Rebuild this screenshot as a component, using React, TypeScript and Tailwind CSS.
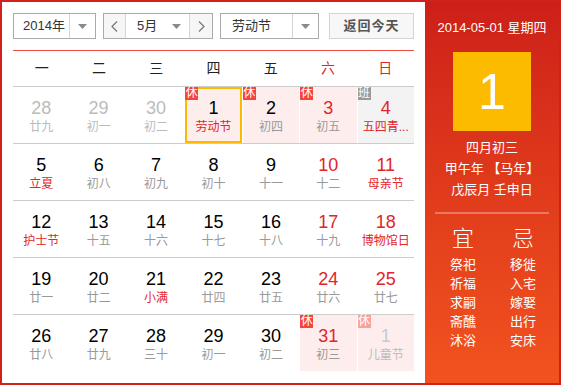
import React from "react";

type Cell = {
  d: string;
  l: string;
  dim?: boolean;
  redNum?: boolean;
  redL?: boolean;
  badge?: "休" | "班";
  bg?: "pink" | "grey";
  sel?: boolean;
  faded?: boolean;
};

const rows: Cell[][] = [
  [
    { d: "28", l: "廿九", dim: true },
    { d: "29", l: "初一", dim: true },
    { d: "30", l: "初二", dim: true },
    { d: "1", l: "劳动节", redL: true, badge: "休", bg: "pink", sel: true },
    { d: "2", l: "初四", badge: "休", bg: "pink" },
    { d: "3", l: "初五", redNum: true, badge: "休", bg: "pink" },
    { d: "4", l: "五四青...", redNum: true, redL: true, badge: "班", bg: "grey" },
  ],
  [
    { d: "5", l: "立夏", redL: true },
    { d: "6", l: "初八" },
    { d: "7", l: "初九" },
    { d: "8", l: "初十" },
    { d: "9", l: "十一" },
    { d: "10", l: "十二", redNum: true },
    { d: "11", l: "母亲节", redNum: true, redL: true },
  ],
  [
    { d: "12", l: "护士节", redL: true },
    { d: "13", l: "十五" },
    { d: "14", l: "十六" },
    { d: "15", l: "十七" },
    { d: "16", l: "十八" },
    { d: "17", l: "十九", redNum: true },
    { d: "18", l: "博物馆日", redNum: true, redL: true },
  ],
  [
    { d: "19", l: "廿一" },
    { d: "20", l: "廿二" },
    { d: "21", l: "小满", redL: true },
    { d: "22", l: "廿四" },
    { d: "23", l: "廿五" },
    { d: "24", l: "廿六", redNum: true },
    { d: "25", l: "廿七", redNum: true },
  ],
  [
    { d: "26", l: "廿八" },
    { d: "27", l: "廿九" },
    { d: "28", l: "三十" },
    { d: "29", l: "初一" },
    { d: "30", l: "初二" },
    { d: "31", l: "初三", redNum: true, badge: "休", bg: "pink" },
    { d: "1", l: "儿童节", dim: true, badge: "休", bg: "pink", faded: true },
  ],
];

const weekdays = ["一", "二", "三", "四", "五", "六", "日"];

const CJK = "font-['Liberation_Sans','Noto_Sans_CJK_SC',sans-serif]";

function Caret() {
  return (
    <svg width="9" height="5" viewBox="0 0 9 5">
      <path d="M0 0 H9 L4.5 5 Z" fill="#8a8a8a" />
    </svg>
  );
}

function Chevron({ dir }: { dir: "l" | "r" }) {
  return (
    <svg width="7" height="11" viewBox="0 0 7 11">
      <path
        d={dir === "l" ? "M6 0.5 L1 5.5 L6 10.5" : "M1 0.5 L6 5.5 L1 10.5"}
        fill="none"
        stroke="#777"
        strokeWidth="1.2"
      />
    </svg>
  );
}

function DayCell({ c }: { c: Cell }) {
  const bg =
    c.bg === "pink" ? "bg-[#fdeeed]" : c.bg === "grey" ? "bg-[#f3f3f3]" : "bg-white";
  const numColor = c.dim
    ? c.faded
      ? "text-[#c5cbd2]"
      : "text-[#bbbbbb]"
    : c.redNum
    ? "text-[#e3242b]"
    : "text-black";
  const lColor = c.dim ? "text-[#bbbbbb]" : c.redL ? "text-[#e3242b]" : "text-[#999999]";
  const badgeColor =
    c.badge === "班" ? "bg-[#999999]" : c.faded ? "bg-[#f7a39c]" : "bg-[#f5443c]";
  return (
    <div
      className={`relative h-[56px] flex flex-col items-center ${bg} ${
        c.sel ? "border-2 border-[#fcb900] pt-[8px]" : "pt-[10px]"
      }`}
    >
      {c.badge && (
        <div
          className={`absolute ${c.sel ? "-left-[2px] -top-[2px]" : "left-0 top-0"} w-[13px] h-[13px] ${badgeColor} text-white text-[12px] leading-[13px] flex items-center justify-center`}
        >
          {c.badge}
        </div>
      )}
      <div className={`text-[18px] leading-[22px] ${numColor}`}>{c.d}</div>
      <div className={`text-[12px] leading-[16px] whitespace-nowrap ${lColor}`}>{c.l}</div>
    </div>
  );
}

export default function App() {
  return (
    <div className={`w-[561px] h-[385px] flex border-2 border-[#d0211b] bg-[#d0211b] ${CJK}`}>
      {/* Left calendar */}
      <div className="w-[423px] h-full bg-white px-[11px] pt-[11px] flex flex-col">
        {/* Header controls */}
        <div className="flex h-[26px] text-[13px] text-[#333]">
          <div className="w-[83px] flex border border-[#aaaaaa] bg-white">
            <div className="flex-1 flex items-center pl-[9px]">2014年</div>
            <div className="w-[26px] border-l border-[#d5d5d5] flex items-center justify-center">
              <Caret />
            </div>
          </div>
          <div className="w-[110px] ml-[7px] flex border border-[#aaaaaa]">
            <div className="w-[22px] bg-[#f6f6f6] border-r border-[#d5d5d5] flex items-center justify-center">
              <Chevron dir="l" />
            </div>
            <div className="flex-1 flex items-center justify-between pl-[11px] pr-[8px] bg-white">
              <span>5月</span>
              <Caret />
            </div>
            <div className="w-[23px] bg-[#f6f6f6] border-l border-[#d5d5d5] flex items-center justify-center">
              <Chevron dir="r" />
            </div>
          </div>
          <div className="w-[99px] ml-[7px] flex border border-[#aaaaaa] bg-white">
            <div className="flex-1 flex items-center pl-[11px]">劳动节</div>
            <div className="w-[26px] border-l border-[#d5d5d5] flex items-center justify-center">
              <Caret />
            </div>
          </div>
          <div className="w-[85px] ml-[10px] flex items-center justify-center border border-[#d5d5d5] bg-[#f7f7f7] text-[#555] font-bold tracking-[1px]">
            返回今天
          </div>
        </div>

        <div className="mt-[11px] h-px bg-[#ef4a40]" />

        {/* Weekday header */}
        <div className="grid grid-cols-7 h-[35px] items-center text-[14px]">
          {weekdays.map((w, i) => (
            <div
              key={w}
              className={`text-center ${i >= 5 ? "text-[#e3242b]" : "text-[#222]"}`}
            >
              {w}
            </div>
          ))}
        </div>

        {/* Grid */}
        {rows.map((r, ri) => (
          <div key={ri} className="border-t border-[#cccccc] grid grid-cols-7 gap-x-px">
            {r.map((c, ci) => (
              <DayCell key={ci} c={c} />
            ))}
          </div>
        ))}
      </div>

      {/* Right panel */}
      <div className="flex-1 h-full bg-linear-to-b from-[#cd1f19] to-[#f3521f] flex flex-col items-center text-white">
        <div className="mt-[17px] text-[13px] leading-[18px] whitespace-nowrap">2014-05-01 星期四</div>
        <div className="mt-[15px] w-[78px] h-[79px] bg-[#fdbb00] flex items-center justify-center text-[50px] leading-none font-['Liberation_Sans',sans-serif]">
          1
        </div>
        <div className="mt-[6px] text-[13px] leading-[21px] text-center whitespace-nowrap">
          <div>四月初三</div>
          <div>甲午年 【马年】</div>
          <div>戊辰月 壬申日</div>
        </div>
        <div className="mt-[12px] w-[114px] h-[2px] bg-white/30" />
        <div className="mt-[12px] flex gap-[34px] pl-[2px]">
          {[
            { t: "宜", items: ["祭祀", "祈福", "求嗣", "斋醮", "沐浴"] },
            { t: "忌", items: ["移徙", "入宅", "嫁娶", "出行", "安床"] },
          ].map((col) => (
            <div key={col.t} className="flex flex-col items-center w-[26px]">
              <div className="text-[22px] leading-[26px] mb-[3px] font-light">{col.t}</div>
              {col.items.map((it) => (
                <div key={it} className="text-[13px] leading-[19px] whitespace-nowrap">
                  {it}
                </div>
              ))}
            </div>
          ))}
        </div>
      </div>
    </div>
  );
}
